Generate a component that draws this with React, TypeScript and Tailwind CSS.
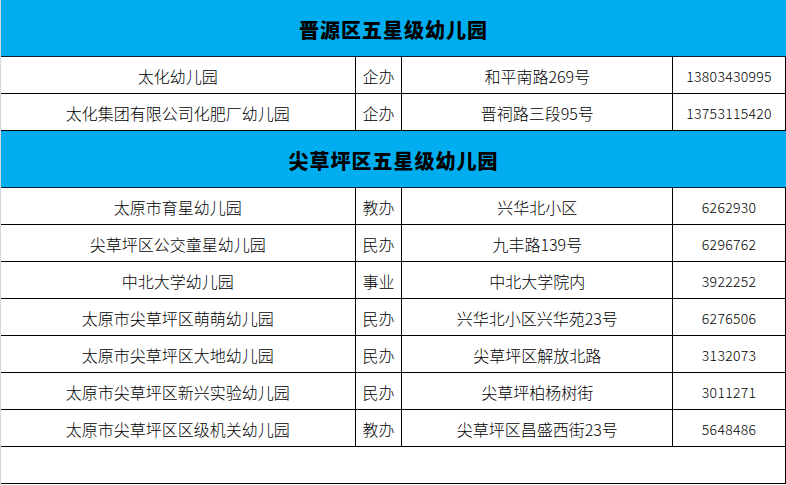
const jinyuan = [
  ["太化幼儿园", "企办", "和平南路269号", "13803430995"],
  ["太化集团有限公司化肥厂幼儿园", "企办", "晋祠路三段95号", "13753115420"],
];

const jiancaoping = [
  ["太原市育星幼儿园", "教办", "兴华北小区", "6262930"],
  ["尖草坪区公交童星幼儿园", "民办", "九丰路139号", "6296762"],
  ["中北大学幼儿园", "事业", "中北大学院内", "3922252"],
  ["太原市尖草坪区萌萌幼儿园", "民办", "兴华北小区兴华苑23号", "6276506"],
  ["太原市尖草坪区大地幼儿园", "民办", "尖草坪区解放北路", "3132073"],
  ["太原市尖草坪区新兴实验幼儿园", "民办", "尖草坪柏杨树街", "3011271"],
  ["太原市尖草坪区区级机关幼儿园", "教办", "尖草坪区昌盛西街23号", "5648486"],
];

function SectionHeader({ title }: { title: string }) {
  return (
    <div className="h-[57px] bg-[#00aeef] border-b border-[#102030] flex items-center justify-center pt-[3px]">
      <span className="text-[20px] font-black text-black tracking-[1px]">{title}</span>
    </div>
  );
}

function Row({ cells }: { cells: string[] }) {
  const [name, kind, addr, phone] = cells;
  return (
    <div className="h-[37px] border-b border-black flex font-light text-[16px] text-black">
      <div className="w-[355px] border-r border-black flex items-center justify-center pt-[2px]">{name}</div>
      <div className="w-[47px] border-r border-black flex items-center justify-center pt-[2px]">{kind}</div>
      <div className="w-[271px] border-r border-black flex items-center justify-center pt-[2px]">{addr}</div>
      <div className="w-[113px] border-r border-black flex items-center justify-center pt-[2px] text-[14px] tracking-[0.3px]">
        {phone}
      </div>
    </div>
  );
}

export default function App() {
  return (
    <div
      className="w-[786px] h-[485px] bg-white border-l border-[#d4d6e4] overflow-hidden"
      style={{ fontFamily: '"Noto Sans CJK SC", "Liberation Sans", sans-serif' }}
    >
      <SectionHeader title="晋源区五星级幼儿园" />
      {jinyuan.map((r) => (
        <Row key={r[0]} cells={r} />
      ))}
      <SectionHeader title="尖草坪区五星级幼儿园" />
      {jiancaoping.map((r) => (
        <Row key={r[0]} cells={r} />
      ))}
      {/* empty trailing row */}
      <div className="h-[37px] border-b border-r border-black" />
    </div>
  );
}
